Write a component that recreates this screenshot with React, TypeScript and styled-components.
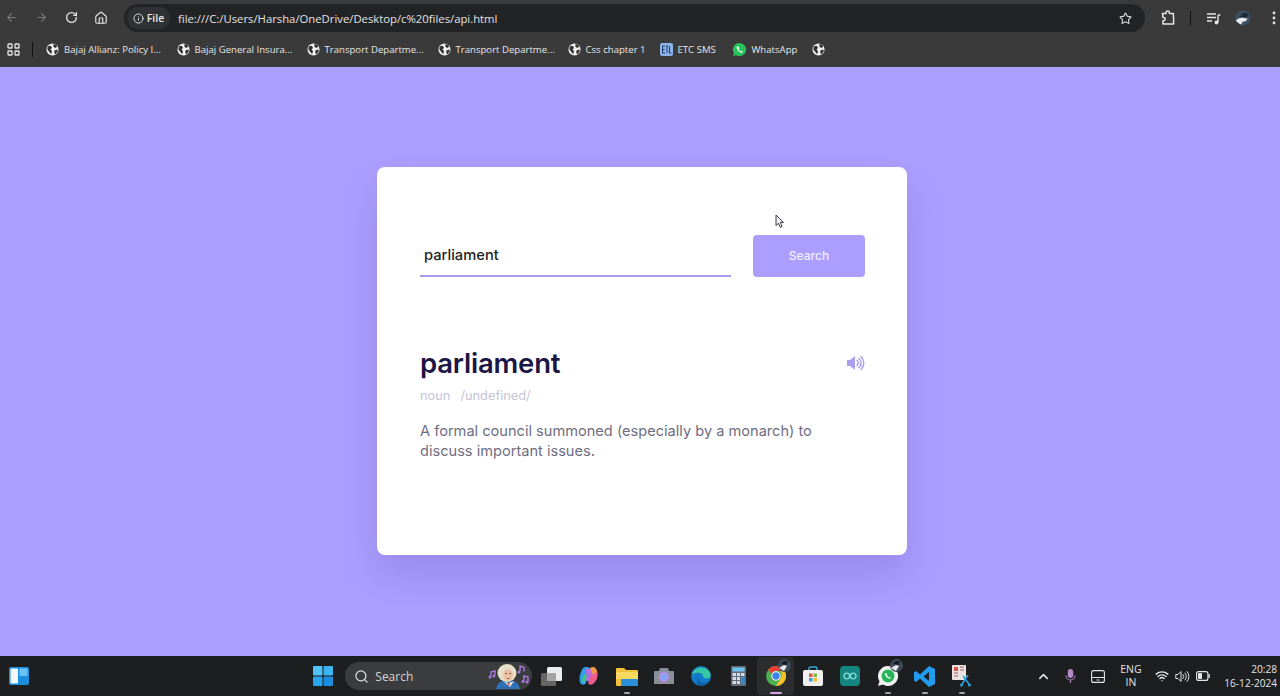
import React from "react";
import styled, { createGlobalStyle } from "styled-components";
import {
  ArrowLeft, ArrowRight, RotateCw, Home, Info, Star, Search as SearchIcon, ChevronUp, Wifi,
} from "lucide-react";

const Global = createGlobalStyle`
  html, body { margin: 0; padding: 0; height: 100%; overflow: hidden; }
  body { font-family: "Inter", "Liberation Sans", sans-serif; background: #ac9eff; }
  * { box-sizing: border-box; }
`;

const Screen = styled.div`
  width: 1280px;
  height: 696px;
  display: flex;
  flex-direction: column;
`;

/* ---------- browser chrome ---------- */
const Chrome = styled.header`
  height: 67px;
  background: #3a3a3a;
  display: flex;
  flex-direction: column;
  color: #e6e6e6;
`;
const Toolbar = styled.div`
  height: 36px;
  display: flex;
  align-items: center;
`;
const NavSlot = styled.div<{ $dim?: boolean }>`
  width: 30px;
  flex: none;
  display: flex;
  justify-content: center;
  color: ${(p) => (p.$dim ? "#7b7b7b" : "#e2e2e2")};
`;
const NavGroup = styled.div`
  display: flex;
  width: 124px;
  flex: none;
  margin-left: -4px;
  margin-right: 4px;
`;
const Omnibox = styled.div`
  width: 1021px;
  height: 28px;
  flex: none;
  background: #222325;
  border-radius: 14px;
  display: flex;
  align-items: center;
  padding: 0 13px 0 3px;
`;
const FileChip = styled.div`
  width: 43px;
  height: 22px;
  border-radius: 11px;
  background: #303134;
  display: flex;
  align-items: center;
  justify-content: center;
  gap: 3px;
  font: 600 10.5px "Open Sans", sans-serif;
  color: #e8e8e8;
`;
const Url = styled.span`
  margin-left: 8px;
  flex: 1;
  font: 400 11.3px "Open Sans", sans-serif;
  color: #e4e4e4;
  white-space: nowrap;
`;
const ToolRight = styled.div`
  display: flex;
  align-items: center;
  flex: 1;
  padding-right: 4px;
  color: #e2e2e2;
`;
const ToolSlot = styled.div<{ $w: number }>`
  width: ${(p) => p.$w}px;
  flex: none;
  display: flex;
  justify-content: center;
  align-items: center;
`;
const DotsSlot = styled.div`
  flex: 1;
  display: flex;
  justify-content: flex-end;
`;
const Rule = styled.div`
  width: 1px;
  height: 15px;
  flex: none;
  background: #111;
`;
const Bookmarks = styled.nav`
  height: 31px;
  display: flex;
  align-items: center;
  padding: 0 0 4px 7px;
`;
const BookRule = styled.div`
  width: 1px;
  height: 15px;
  background: #111;
  margin: 0 13px 0 12px;
`;
const Bookmark = styled.div<{ $w: number }>`
  width: ${(p) => p.$w}px;
  flex: none;
  display: flex;
  align-items: center;
  gap: 5px;
  font: 400 9.6px "Open Sans", sans-serif;
  color: #e6e6e6;
  white-space: nowrap;
`;

/* ---------- page ---------- */
const Page = styled.main`
  flex: 1;
  background: #ac9eff;
  display: flex;
  align-items: center;
  justify-content: center;
  padding: 0 0 1px 4px;
`;
const Card = styled.section`
  position: relative;
  width: 530px;
  height: 388px;
  background: #fff;
  border-radius: 8px;
  padding: 68px 42px 0 43px;
  box-shadow: 0 20px 35px rgba(60, 40, 130, 0.17);
`;
const SearchRow = styled.div`
  display: flex;
  justify-content: space-between;
  height: 42px;
`;
const InputBox = styled.div`
  width: 311px;
  height: 42px;
  border-bottom: 2px solid #a99cf0;
  padding: 10px 0 0 4px;
  font: 500 14.7px/20px "Inter", sans-serif;
  color: #222;
`;
const SearchButton = styled.button`
  width: 112px;
  height: 42px;
  border: none;
  border-radius: 4px;
  padding: 0 0 2px;
  background: #ac9eff;
  color: #f2efff;
  font: 500 12px "Inter", sans-serif;
`;
const WordRow = styled.div`
  display: flex;
  justify-content: space-between;
  align-items: center;
  margin-top: 68px;
  height: 36px;
`;
const Word = styled.h1`
  margin: 0;
  font: 600 27.5px/36px "Inter", sans-serif;
  color: #1d1645;
  letter-spacing: -0.2px;
`;
const Meta = styled.div`
  display: flex;
  gap: 10px;
  margin-top: 5px;
  font: 400 12.8px/20px "Inter", sans-serif;
  color: #c5c3d6;
`;
const Definition = styled.p`
  margin: 15px 0 0;
  width: 420px;
  font: 400 14.6px/20px "Inter", sans-serif;
  color: #6f6d82;
`;
const Cursor = styled.svg`
  position: absolute;
  left: 398px;
  top: 47px;
`;

/* ---------- taskbar ---------- */
const Taskbar = styled.footer`
  height: 40px;
  background: #1c1e1f;
  display: flex;
  align-items: center;
  color: #e6e6e6;
`;
const Widgets = styled.div`
  width: 304px;
  flex: none;
  padding-left: 9px;
  display: flex;
`;
const TaskIcon = styled.div<{ $active?: boolean; $dot?: boolean }>`
  position: relative;
  width: 37.3px;
  height: 38px;
  flex: none;
  display: flex;
  align-items: center;
  justify-content: center;
  border-radius: 4px;
  background: ${(p) => (p.$active ? "#2b2d2e" : "transparent")};
  &::after {
    content: "";
    display: ${(p) => (p.$dot || p.$active ? "block" : "none")};
    position: absolute;
    bottom: 1px;
    left: 50%;
    transform: translateX(-50%);
    width: ${(p) => (p.$active ? 12 : 6)}px;
    height: 2px;
    border-radius: 1px;
    background: ${(p) => (p.$active ? "#d9a6e8" : "#a5a5a5")};
  }
`;
const SearchPill = styled.div`
  width: 187px;
  height: 28px;
  flex: none;
  margin: 0 1px 0 4px;
  border-radius: 14px;
  background: #3b3c3e;
  display: flex;
  align-items: center;
  padding: 0 1px 0 9px;
  gap: 6px;
  font: 400 12px "Open Sans", sans-serif;
  color: #d4d4d4;
`;
const PillLabel = styled.span`
  flex: 1;
`;
const Tray = styled.div`
  margin-left: 53px;
  display: flex;
  align-items: center;
  flex: 1;
  color: #e6e6e6;
`;
const TraySlot = styled.div<{ $w: number }>`
  width: ${(p) => p.$w}px;
  flex: none;
  display: flex;
  justify-content: center;
  align-items: center;
`;
const Lang = styled.div`
  width: 40px;
  text-align: center;
  font: 400 10.4px/13.5px "Open Sans", sans-serif;
`;
const Clock = styled.div`
  flex: 1;
  padding-right: 3px;
  text-align: right;
  font: 400 10.1px/14px "Open Sans", sans-serif;
  white-space: nowrap;
`;

/* ---------- drawn icons ---------- */
const Globe = () => (
  <svg width="13" height="13" viewBox="0 0 14 14">
    <circle cx="7" cy="7" r="6.5" fill="#f0f0f0" />
    <path d="M2 3.5 5 3l1.5 2L5 7l1.5 2-1 3L3 9 1.5 7zM8 1l3 1 1 2-2 1.5L8 4zM9 8l3-1 .8 1.5L10.500 12 9 11z" fill="#333" />
  </svg>
);
const AppsGrid = () => (
  <svg width="13" height="13" viewBox="0 0 13 13" fill="none" stroke="#e6e6e6" strokeWidth="1.3">
    <rect x="1" y="1" width="4" height="4" rx=".6" />
    <rect x="8" y="1" width="4" height="4" rx=".6" />
    <rect x="1" y="8" width="4" height="4" rx=".6" />
    <rect x="8" y="8" width="4" height="4" rx=".6" />
  </svg>
);
const EtcIcon = () => (
  <svg width="13" height="13" viewBox="0 0 13 13">
    <rect width="13" height="13" rx="2" fill="#8db4ea" />
    <path d="M2.500 3h2.500M2.500 3v7h2.500M2.500 6.500h2M6 3h2M7 3v7M9.500 3v7h2" stroke="#1d3a6b" strokeWidth="1" fill="none" />
  </svg>
);
const WhatsIcon = ({ size = 15 }: { size?: number }) => (
  <svg width={size} height={size} viewBox="0 0 16 16">
    <path d="M8 1a7 7 0 0 0-6 10.600L1 15l3.500-1A7 7 0 1 0 8 1z" fill="#29c15a" />
    <path d="M5.800 4.500c-.8.500-1 1.500-.5 2.700.7 1.800 2.200 3.300 4 4 1 .4 2 .1 2.400-.8l-1.700-1.200-.9.700c-.9-.4-1.700-1.200-2.100-2.100l.7-.9-1-2.400z" fill="#fff" />
  </svg>
);
const ExtensionIcon = () => (
  <svg width="16" height="16" viewBox="0 0 16 16" fill="none" stroke="#e6e6e6" strokeWidth="1.500" strokeLinejoin="round">
    <path d="M2.500 3.500H6V2.800a1.700 1.700 0 0 1 3.400 0v.7h4v4h.2a1.700 1.700 0 0 1 0 0V14H3V10.800h.5a1.700 1.700 0 0 0 0-3.400H3z" />
  </svg>
);
const MediaIcon = () => (
  <svg width="15" height="13" viewBox="0 0 15 13" fill="none" stroke="#e6e6e6" strokeWidth="1.400">
    <path d="M1 2h9M1 5.500h9M1 9h5" />
    <path d="M12 3v7.500" />
    <circle cx="10.500" cy="10.500" r="1.200" fill="#e6e6e6" />
    <path d="M12 3h2.500" />
  </svg>
);
const ProfileIcon = () => (
  <svg width="20" height="20" viewBox="0 0 20 20">
    <circle cx="10" cy="10" r="9.500" fill="#3d4f63" />
    <path d="M6 9 C8 3 13 2 17 5 L15 9z" fill="#1e2c3d" />
    <path d="M1 13c3-3 7-4 10-3l5 1-3 3-4 1-1 3-3-1z" fill="#e9e9e9" />
  </svg>
);
const Dots = () => (
  <svg width="4" height="14" viewBox="0 0 4 14" fill="#e6e6e6">
    <circle cx="2" cy="2" r="1.400" />
    <circle cx="2" cy="7" r="1.400" />
    <circle cx="2" cy="12" r="1.400" />
  </svg>
);
const Speaker = () => (
  <svg width="19" height="16" viewBox="0 0 19 16">
    <path d="M1 5h3l5-4v14l-5-4H1z" fill="#ab9df0" />
    <path d="M11 5.500a3.200 3.200 0 0 1 0 5M13 3.500a6 6 0 0 1 0 9M15 1.500a9 9 0 0 1 0 13" stroke="#ab9df0" strokeWidth="1.500" fill="none" strokeLinecap="round" />
  </svg>
);
const WidgetIcon = () => (
  <svg width="20" height="20" viewBox="0 0 20 20">
    <rect x="0" y="1" width="20" height="18" rx="2" fill="#1b8fdc" />
    <rect x="1.500" y="2.500" width="7.500" height="15" rx="1" fill="#f3f6fa" />
    <rect x="10.500" y="2.500" width="8" height="7.500" fill="#6cc4f5" />
  </svg>
);
const WinLogo = () => (
  <svg width="20" height="20" viewBox="0 0 20 20">
    <rect x="0" y="0" width="9.500" height="9.500" rx="1" fill="#4fc3f7" />
    <rect x="10.500" y="0" width="9.500" height="9.500" rx="1" fill="#3bb4f2" />
    <rect x="0" y="10.500" width="9.500" height="9.500" rx="1" fill="#29a5ec" />
    <rect x="10.500" y="10.500" width="9.500" height="9.500" rx="1" fill="#1a8fe0" />
  </svg>
);
const Avatar = () => (
  <svg width="44" height="26" viewBox="0 0 44 26">
    <path d="M4 13V9l4-1v4" stroke="#a87ae0" strokeWidth="1.400" fill="none" />
    <circle cx="3" cy="14" r="1.500" fill="#a87ae0" />
    <circle cx="7" cy="13" r="1.500" fill="#a87ae0" />
    <path d="M9 26c1-6 5-9 12-9s11 3 12 9z" fill="#2f6fb5" />
    <path d="M17 19l5 1 5-2-4 6z" fill="#f3ece4" />
    <path d="M20 20l3 .5-1 3z" fill="#d64a3c" />
    <ellipse cx="20" cy="10" rx="9.500" ry="9" fill="#e6dfc9" />
    <ellipse cx="21" cy="12" rx="5" ry="6" fill="#eac0a5" />
    <path d="M18.500 10.500h1.500M22.500 10.500H24" stroke="#5a3d30" strokeWidth="1" />
    <path d="M20 15.500h2.500" stroke="#a8503f" strokeWidth="1" />
    <path d="M33 8V3l4 1.500v4" stroke="#a87ae0" strokeWidth="1.400" fill="none" />
    <circle cx="32" cy="9" r="1.500" fill="#a87ae0" />
    <path d="M37 18v-5l4 1v5" stroke="#a87ae0" strokeWidth="1.400" fill="none" />
    <circle cx="36" cy="18.500" r="1.500" fill="#a87ae0" />
    <circle cx="40" cy="19" r="1.500" fill="#a87ae0" />
  </svg>
);
const TaskView = () => (
  <svg width="21" height="19" viewBox="0 0 21 19">
    <rect x="0" y="6" width="15" height="13" rx="1.500" fill="#666" />
    <rect x="6" y="0" width="15" height="14" rx="1.500" fill="#ececec" />
    <rect x="6" y="6" width="9" height="8" fill="#a4a4a4" />
  </svg>
);
const Copilot = () => (
  <svg width="20" height="20" viewBox="0 0 20 20">
    <path d="M7 1C4 1 3 3 2 6c-2 5-2 10 0 12 2 1 4 1 5-1l4-14C10 1 9 1 7 1z" fill="#2f9fe8" />
    <path d="M11 2c3-2 6-1 7 3 1 4 0 8-1 9l-6-3z" fill="#f29b45" />
    <path d="M7 3h4.500L14 9l-3 7-5-2z" fill="#b96be0" />
    <path d="M18 6c1 5-1 10-4 12-2 1-4 1-5-1l3-7z" fill="#ee5a8b" />
    <path d="M3 13c1-3 3-5 4-6l1 4-3 6c-1 .5-2-1-2-4z" fill="#42c58a" />
  </svg>
);
const Folder = () => (
  <svg width="22" height="19" viewBox="0 0 22 19">
    <path d="M0 2a1 1 0 0 1 1-1h7l2 2h11a1 1 0 0 1 1 1v14a1 1 0 0 1-1 1H1a1 1 0 0 1-1-1z" fill="#f5c33b" />
    <rect x="0" y="5" width="22" height="7" fill="#fbd960" />
    <rect x="5" y="12" width="17" height="7" rx="1" fill="#2a8fd8" />
  </svg>
);
const Camera = () => (
  <svg width="20" height="18" viewBox="0 0 20 18">
    <path d="M0 5a1 1 0 0 1 1-1h4l1-3h8l1 3h4a1 1 0 0 1 1 1v11a1 1 0 0 1-1 1H1a1 1 0 0 1-1-1z" fill="#8a9099" />
    <circle cx="10" cy="10" r="5" fill="#b48ef0" />
    <circle cx="10" cy="10" r="3" fill="#7fa8f5" />
  </svg>
);
const Edge = () => (
  <svg width="20" height="20" viewBox="0 0 20 20">
    <circle cx="10" cy="10" r="10" fill="#1379c9" />
    <path d="M1 8C3 1 13-1 18 5c2 3 2 6 0 7-3 1-6 0-6-2 0-3-4-4-7-3-2 .5-3 1-4 1z" fill="#35c7a3" />
    <path d="M8 9c-2 3 0 8 5 8 2 0 4-1 5-2-2 5-8 5-8 5-4 0-5-6-2-11z" fill="#0d5fa5" />
  </svg>
);
const Calc = () => (
  <svg width="15" height="20" viewBox="0 0 15 20">
    <rect width="15" height="20" rx="1" fill="#5f6b78" />
    <rect x="1.500" y="1.500" width="12" height="4" fill="#6cc4f0" />
    <path d="M1.500 7h3.500v3H1.500zM6 7h3v3H6zM10 7h3.500v3H10zM1.500 11h3.500v3H1.500zM6 11h3v3H6zM1.500 15h3.500v3H1.500zM6 15h3v3H6z" fill="#d5dbe0" />
    <rect x="10" y="11" width="3.500" height="7" fill="#2a8fd8" />
  </svg>
);
const ProfileBadge = styled.svg`
  position: absolute;
  top: 2px;
  right: 3px;
`;
const Badge = () => (
  <ProfileBadge width="13" height="13" viewBox="0 0 13 13">
    <circle cx="6.500" cy="6.500" r="6.500" fill="#3d4a58" />
    <path d="M3 5c1-3 5-4 7-2L8 6z" fill="#141d28" />
    <path d="M1 9l5-3 3 1-3 5z" fill="#e9e9e9" />
  </ProfileBadge>
);
const ChromeLogo = () => (
  <svg width="20" height="20" viewBox="0 0 20 20">
    <circle cx="10" cy="10" r="10" fill="#4caf50" />
    <path d="M10 0a10 10 0 0 1 8.700 5H10a5 5 0 0 0-4.600 3L2 3.500A10 10 0 0 1 10 0z" fill="#e94235" />
    <path d="M18.700 5A10 10 0 0 1 10 20l4.300-7.500A5 5 0 0 0 14 5z" fill="#fbc02d" />
    <circle cx="10" cy="10" r="4.700" fill="#fff" />
    <circle cx="10" cy="10" r="3.700" fill="#3f83ee" />
  </svg>
);
const Store = () => (
  <svg width="20" height="20" viewBox="0 0 20 20">
    <path d="M6 4V2.500A1.500 1.500 0 0 1 7.500 1h5A1.500 1.500 0 0 1 14 2.500V4" stroke="#36a4d8" strokeWidth="1.500" fill="none" />
    <rect x="0" y="4" width="20" height="16" rx="2" fill="#f0f0f0" />
    <rect x="6" y="7.500" width="3.500" height="3.500" fill="#e8552d" />
    <rect x="10.500" y="7.500" width="3.500" height="3.500" fill="#7cb83e" />
    <rect x="6" y="12" width="3.500" height="3.500" fill="#2f9fe0" />
    <rect x="10.500" y="12" width="3.500" height="3.500" fill="#f5b92e" />
  </svg>
);
const Arduino = () => (
  <svg width="20" height="20" viewBox="0 0 20 20" fill="none">
    <rect width="20" height="20" rx="4" fill="#14867f" />
    <circle cx="6.800" cy="10" r="2.800" stroke="#7fdcd5" strokeWidth="1.300" />
    <circle cx="13.200" cy="10" r="2.800" stroke="#7fdcd5" strokeWidth="1.300" />
  </svg>
);
const WhatsTask = () => (
  <svg width="22" height="22" viewBox="0 0 22 22">
    <path d="M11 1a10 10 0 0 0-8.500 15.200L1 21l5-1.400A10 10 0 1 0 11 1z" fill="#f2f2f2" />
    <circle cx="11" cy="11" r="6.500" fill="#27b45a" />
    <path d="M8.800 7.800c-.8.500-.9 1.500-.5 2.500.6 1.500 1.800 2.700 3.300 3.300 1 .3 1.900 0 2.200-.8l-1.400-1-.7.600c-.8-.3-1.400-1-1.800-1.800l.6-.7z" fill="#fff" />
  </svg>
);
const VsCode = () => (
  <svg width="21" height="21" viewBox="0 0 21 21">
    <path d="M15 0 21 3v15l-6 3-9-8.500L2 16l-2-1.500V6.500L2 5l4 3.500zM15 6 9.500 10.500 15 15z" fill="#1f9cf0" />
  </svg>
);
const Snip = () => (
  <svg width="20" height="22" viewBox="0 0 20 22">
    <rect x="0" y="0" width="14" height="15" rx="1" fill="#e9e4e2" />
    <path d="M2 2h4v4H2z" fill="#d4574a" />
    <path d="M8 2h4M8 5h4M2 8h4M2 11h4" stroke="#a05a58" strokeWidth="1.200" />
    <path d="M16 10 10 19M11 11l6 8" stroke="#2f9fe0" strokeWidth="1.500" fill="none" />
    <circle cx="9.500" cy="20" r="1.500" fill="#2f9fe0" />
    <circle cx="17.500" cy="20" r="1.500" fill="#2f9fe0" />
  </svg>
);
const TabletIcon = () => (
  <svg width="14" height="13" viewBox="0 0 14 13" fill="none" stroke="#e6e6e6" strokeWidth="1.100">
    <rect x=".6" y=".6" width="12.800" height="11.800" rx="2" />
    <path d="M.6 7.500h12.800M5.500 10h3" />
  </svg>
);
const MicIcon = () => (
  <svg width="11" height="16" viewBox="0 0 11 16" fill="none">
    <rect x="2.800" y="1" width="5.400" height="9" rx="2.700" fill="#b28ac8" />
    <path d="M1 7.500a4.500 4.500 0 0 0 9 0M5.500 12v3" stroke="#a57fba" strokeWidth="1.200" />
  </svg>
);
const SoundIcon = () => (
  <svg width="15" height="13" viewBox="0 0 15 13" fill="none" stroke="#e6e6e6" strokeWidth="1">
    <path d="M.8 4.500h2.200L6 1.500v10l-3-3H.8z" />
    <path d="M8 4.500a3 3 0 0 1 0 4M10 3a5 5 0 0 1 0 7M12 1.500a7 7 0 0 1 0 10" strokeLinecap="round" />
  </svg>
);
const BatteryIcon = () => (
  <svg width="14" height="10" viewBox="0 0 14 10" fill="none">
    <rect x=".6" y=".6" width="11.300" height="8.800" rx="2" stroke="#e6e6e6" strokeWidth="1.100" />
    <rect x="2" y="2" width="4" height="6" rx=".8" fill="#e6e6e6" />
    <rect x="12.500" y="3" width="1.300" height="4" rx=".6" fill="#e6e6e6" />
  </svg>
);

const bookmarks: { label: string; w: number; icon?: React.ReactNode }[] = [
  { label: "Bajaj Allianz: Policy I...", w: 130.500 },
  { label: "Bajaj General Insura...", w: 130 },
  { label: "Transport Departme...", w: 131 },
  { label: "Transport Departme...", w: 130 },
  { label: "Css chapter 1", w: 92 },
  { label: "ETC SMS", w: 72, icon: <EtcIcon /> },
  { label: "WhatsApp", w: 80, icon: <WhatsIcon /> },
  { label: "", w: 20 },
];

export default function App() {
  return (
    <Screen>
      <Global />
      <Chrome>
        <Toolbar>
          <NavGroup>
            <NavSlot $dim><ArrowLeft size={13} /></NavSlot>
            <NavSlot $dim><ArrowRight size={13} /></NavSlot>
            <NavSlot><RotateCw size={13} strokeWidth={2.400} /></NavSlot>
            <NavSlot><Home size={14} /></NavSlot>
          </NavGroup>
          <Omnibox>
            <FileChip><Info size={11} />File</FileChip>
            <Url>file:///C:/Users/Harsha/OneDrive/Desktop/c%20files/api.html</Url>
            <Star size={13} color="#e2e2e2" />
          </Omnibox>
          <ToolRight>
            <ToolSlot $w={45}><ExtensionIcon /></ToolSlot>
            <Rule />
            <ToolSlot $w={44}><MediaIcon /></ToolSlot>
            <ToolSlot $w={16}><ProfileIcon /></ToolSlot>
            <DotsSlot><Dots /></DotsSlot>
          </ToolRight>
        </Toolbar>
        <Bookmarks>
          <AppsGrid />
          <BookRule />
          {bookmarks.map((b, i) => (
            <Bookmark key={i} $w={b.w}>
              {b.icon ?? <Globe />}
              {b.label && <span>{b.label}</span>}
            </Bookmark>
          ))}
        </Bookmarks>
      </Chrome>

      <Page>
        <Card>
          <Cursor width="10" height="15" viewBox="0 0 10 15">
            <path d="M1 1v10.500l2.500-2.200 1.800 4 1.800-.8-1.800-4H8.500z" fill="#f4f4f8" stroke="#3a3a48" strokeWidth="1" />
          </Cursor>
          <SearchRow>
            <InputBox>parliament</InputBox>
            <SearchButton>Search</SearchButton>
          </SearchRow>
          <WordRow>
            <Word>parliament</Word>
            <Speaker />
          </WordRow>
          <Meta>
            <span>noun</span>
            <span>/undefined/</span>
          </Meta>
          <Definition>
            A formal council summoned (especially by a monarch) to discuss important issues.
          </Definition>
        </Card>
      </Page>

      <Taskbar>
        <Widgets><WidgetIcon /></Widgets>
        <TaskIcon><WinLogo /></TaskIcon>
        <SearchPill>
          <SearchIcon size={15} color="#e0e0e0" />
          <PillLabel>Search</PillLabel>
          <Avatar />
        </SearchPill>
        <TaskIcon><TaskView /></TaskIcon>
        <TaskIcon><Copilot /></TaskIcon>
        <TaskIcon $dot><Folder /></TaskIcon>
        <TaskIcon><Camera /></TaskIcon>
        <TaskIcon><Edge /></TaskIcon>
        <TaskIcon><Calc /></TaskIcon>
        <TaskIcon $active><ChromeLogo /><Badge /></TaskIcon>
        <TaskIcon><Store /></TaskIcon>
        <TaskIcon><Arduino /></TaskIcon>
        <TaskIcon $dot><WhatsTask /><Badge /></TaskIcon>
        <TaskIcon $dot><VsCode /></TaskIcon>
        <TaskIcon $dot><Snip /></TaskIcon>
        <Tray>
          <TraySlot $w={20}><ChevronUp size={15} strokeWidth={2.400} /></TraySlot>
          <TraySlot $w={34}><MicIcon /></TraySlot>
          <TraySlot $w={20}><TabletIcon /></TraySlot>
          <TraySlot $w={46}><Lang>ENG<br />IN</Lang></TraySlot>
          <TraySlot $w={16}><Wifi size={14} strokeWidth={2.400} /></TraySlot>
          <TraySlot $w={26}><SoundIcon /></TraySlot>
          <TraySlot $w={14}><BatteryIcon /></TraySlot>
          <Clock>20:28<br />16-12-2024</Clock>
        </Tray>
      </Taskbar>
    </Screen>
  );
}
